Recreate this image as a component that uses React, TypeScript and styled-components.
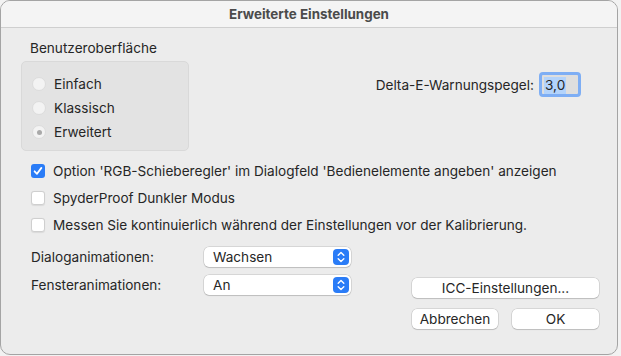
import React, { useState } from 'react';
import styled, { createGlobalStyle } from 'styled-components';

const GlobalStyle = createGlobalStyle`
  html, body {
    margin: 0;
    padding: 0;
    background: #f2f2f2;
    font-family: Inter, 'Liberation Sans', sans-serif;
    font-size: 13.6px;
    color: #262626;
  }
`;

const Window = styled.div`
  box-sizing: border-box;
  width: 618px;
  height: 355px;
  background: #ececec;
  border: 1px solid #a4a4a4;
  border-radius: 10px;
  overflow: hidden;
  display: flex;
  flex-direction: column;
`;

const TitleBar = styled.div`
  height: 26px;
  flex-shrink: 0;
  background: #f4f4f4;
  border-bottom: 1px solid #cfcfcf;
  display: flex;
  align-items: center;
  justify-content: center;
  font-weight: 700;
  font-size: 13.4px;
  color: #4b4b4b;
`;

const Body = styled.div`
  padding: 12px 19px 0 20px;
  display: flex;
  flex-direction: column;
`;

const TopSection = styled.div`
  display: flex;
  align-items: flex-start;
  justify-content: space-between;
`;

const GroupLabel = styled.div`
  padding-left: 9px;
  line-height: 16px;
  margin-bottom: 5px;
`;

const GroupBox = styled.div`
  box-sizing: border-box;
  width: 168px;
  height: 90px;
  padding: 10px 0 0 10px;
  background: #e3e3e3;
  border: 1px solid #d9d9d9;
  border-radius: 5px;
`;

const OptionRow = styled.label`
  height: 24px;
  display: flex;
  align-items: center;
  gap: 8px;
`;

const Radio = styled.span<{ checked?: boolean }>`
  box-sizing: border-box;
  width: 14px;
  height: 14px;
  border-radius: 50%;
  background: #f3f3f3;
  border: 1px solid #dcdcdc;
  display: flex;
  align-items: center;
  justify-content: center;
  &::after {
    content: '';
    width: 5px;
    height: 5px;
    border-radius: 50%;
    background: ${p => (p.checked ? '#a9a9a9' : 'transparent')};
  }
`;

const DeltaRow = styled.div`
  margin-top: 32px;
  margin-right: 17px;
  display: flex;
  align-items: center;
  gap: 5px;
`;

const FieldRing = styled.div`
  box-sizing: border-box;
  width: 42px;
  height: 25px;
  border: 3px solid #7eaef4;
  border-radius: 4px;
  background: #dedede;
  padding: 1px 0 0 2px;
  display: flex;
  align-items: center;
`;

const Selected = styled.span`
  background: #b3d3fb;
  line-height: 17px;
  padding: 0 1px;
`;

const CheckList = styled.div`
  margin-top: 7px;
  padding-left: 10px;
  display: flex;
  flex-direction: column;
`;

const CheckRow = styled.label<{ h: number }>`
  height: ${p => p.h}px;
  display: flex;
  align-items: center;
  gap: 8px;
`;

const Box = styled.span<{ checked?: boolean }>`
  box-sizing: border-box;
  width: 14px;
  height: 14px;
  border-radius: 3px;
  background: ${p => (p.checked ? '#2a7cf7' : '#ffffff')};
  border: ${p => (p.checked ? 'none' : '1px solid #cfcfcf')};
  box-shadow: ${p => (p.checked ? 'none' : '0 0.5px 1px rgba(0,0,0,0.08)')};
  display: flex;
  align-items: center;
  justify-content: center;
`;

const BottomSection = styled.div`
  margin-top: 9px;
  display: flex;
  align-items: flex-start;
  padding-left: 10px;
`;

const SelectGrid = styled.div`
  display: grid;
  grid-template-columns: 173px 147px;
  row-gap: 8px;
  align-items: center;
`;

const SelectBox = styled.div`
  box-sizing: border-box;
  height: 20px;
  background: #ffffff;
  border-radius: 5px;
  box-shadow: 0 0 0 0.5px rgba(0, 0, 0, 0.18), 0 1px 1px rgba(0, 0, 0, 0.12);
  display: flex;
  align-items: center;
  justify-content: space-between;
  padding: 0 2px 0 9px;
`;

const Stepper = styled.span`
  width: 16px;
  height: 16px;
  border-radius: 4px;
  background: #2a7cf7;
  display: flex;
  align-items: center;
  justify-content: center;
`;

const ButtonColumn = styled.div`
  flex-shrink: 0;
  margin-left: 61px;
  padding-top: 31px;
  display: flex;
  flex-direction: column;
  gap: 11px;
  width: 187px;
`;

const ButtonRow = styled.div`
  display: flex;
  justify-content: space-between;
`;

const Button = styled.button<{ w?: number }>`
  box-sizing: border-box;
  width: ${p => (p.w ? `${p.w}px` : '100%')};
  height: 20px;
  border: none;
  border-radius: 5px;
  background: #ffffff;
  box-shadow: 0 0 0 0.5px rgba(0, 0, 0, 0.18), 0 1px 1px rgba(0, 0, 0, 0.12);
  font-family: inherit;
  font-size: 13.6px;
  color: #262626;
  padding: 0;
`;

const Check = () => (
  <svg width="10" height="10" viewBox="0 0 10 10">
    <path d="M1.6 5.3 L4 7.8 L8.4 1.9" fill="none" stroke="#fff" strokeWidth="1.8" strokeLinecap="round" strokeLinejoin="round" />
  </svg>
);

const Chevrons = () => (
  <svg width="8" height="12" viewBox="0 0 8 12">
    <path d="M1.2 4.3 L4 1.6 L6.8 4.3 M1.2 7.7 L4 10.4 L6.8 7.7" fill="none" stroke="#fff" strokeWidth="1.4" strokeLinecap="round" strokeLinejoin="round" />
  </svg>
);

const modes = ['Einfach', 'Klassisch', 'Erweitert'];

const checks = [
  { text: "Option 'RGB-Schieberegler' im Dialogfeld 'Bedienelemente angeben' anzeigen", on: true, h: 26 },
  { text: 'SpyderProof Dunkler Modus', on: false, h: 27 },
  { text: 'Messen Sie kontinuierlich während der Einstellungen vor der Kalibrierung.', on: false, h: 27 },
];

export default function App() {
  const [mode] = useState('Erweitert');
  return (
    <>
      <GlobalStyle />
      <Window>
        <TitleBar>Erweiterte Einstellungen</TitleBar>
        <Body>
          <TopSection>
            <div>
              <GroupLabel>Benutzeroberfläche</GroupLabel>
              <GroupBox>
                {modes.map(m => (
                  <OptionRow key={m}>
                    <Radio checked={m === mode} />
                    {m}
                  </OptionRow>
                ))}
              </GroupBox>
            </div>
            <DeltaRow>
              <span>Delta-E-Warnungspegel:</span>
              <FieldRing>
                <Selected>3,0</Selected>
              </FieldRing>
            </DeltaRow>
          </TopSection>

          <CheckList>
            {checks.map(c => (
              <CheckRow key={c.text} h={c.h}>
                <Box checked={c.on}>{c.on && <Check />}</Box>
                {c.text}
              </CheckRow>
            ))}
          </CheckList>

          <BottomSection>
            <SelectGrid>
              <span>Dialoganimationen:</span>
              <SelectBox>
                Wachsen
                <Stepper><Chevrons /></Stepper>
              </SelectBox>
              <span>Fensteranimationen:</span>
              <SelectBox>
                An
                <Stepper><Chevrons /></Stepper>
              </SelectBox>
            </SelectGrid>
            <ButtonColumn>
              <Button>ICC-Einstellungen...</Button>
              <ButtonRow>
                <Button w={86}>Abbrechen</Button>
                <Button w={87}>OK</Button>
              </ButtonRow>
            </ButtonColumn>
          </BottomSection>
        </Body>
      </Window>
    </>
  );
}
